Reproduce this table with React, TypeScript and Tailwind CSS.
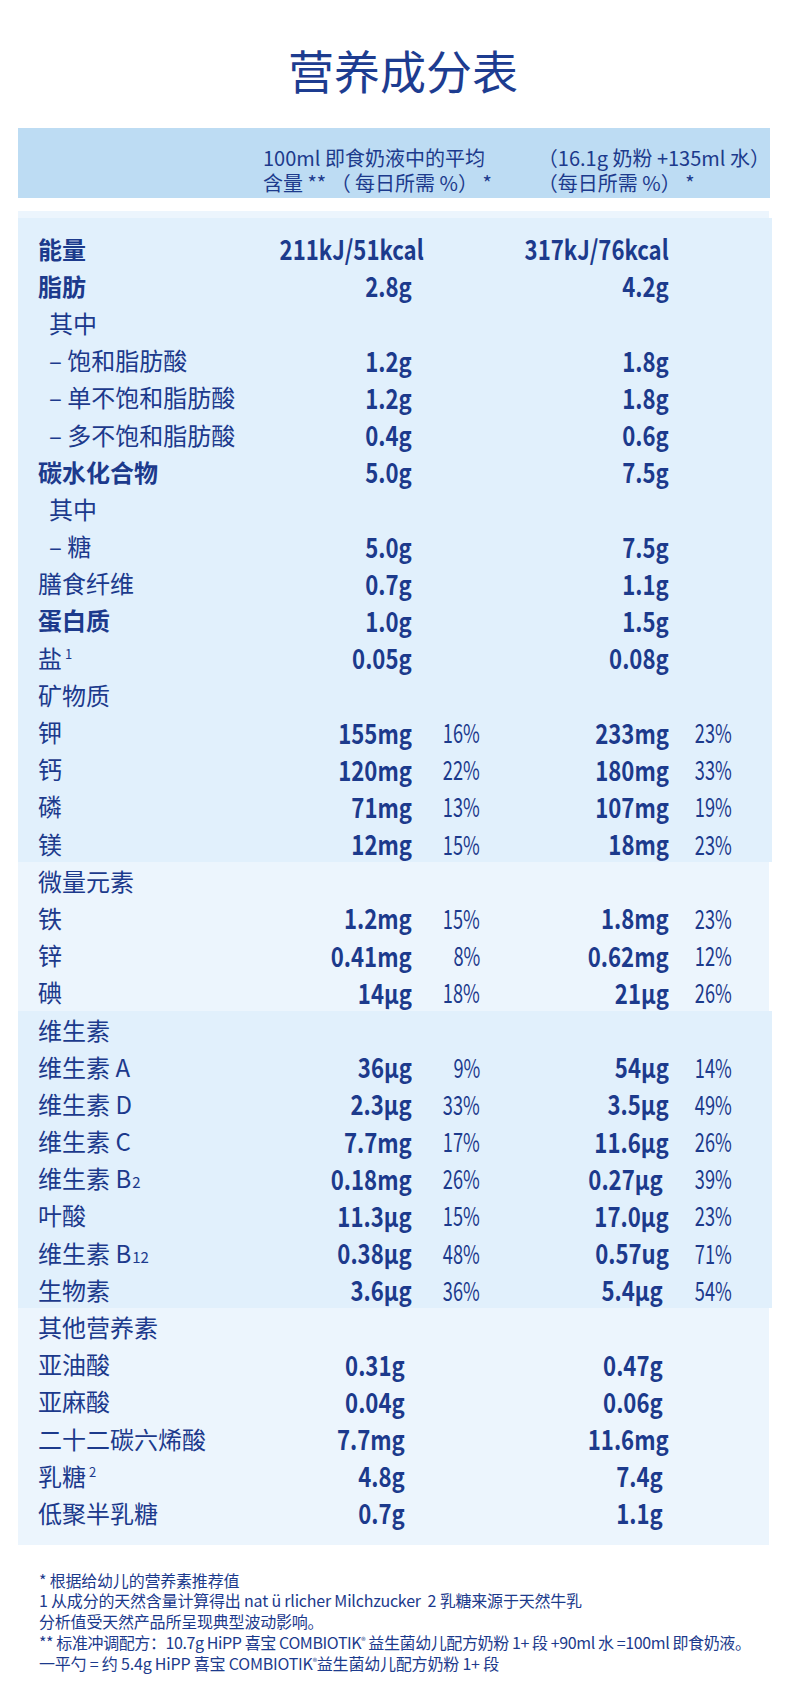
import type { ReactNode } from "react";

type Row = {
  label: ReactNode;
  v1?: string;
  p1?: string;
  v2?: string;
  p2?: string;
  bold?: boolean;
  indent?: boolean;
  v1Cls?: string;
  v2Cls?: string;
};

type Section = { tone: "dark" | "light"; rows: Row[] };

const Sub = ({ children }: { children: ReactNode }) => (
  <span className="ml-[1px] text-[15px]">{children}</span>
);
const Sup = ({ children }: { children: ReactNode }) => (
  <span className="relative top-[-9px] ml-[3px] text-[13px]">{children}</span>
);

const SECTIONS: Section[] = [
  {
    tone: "dark",
    rows: [
      { label: "能量", v1: "211kJ/51kcal", v2: "317kJ/76kcal", bold: true },
      { label: "脂肪", v1: "2.8g", v2: "4.2g", bold: true },
      { label: "其中", indent: true },
      { label: "– 饱和脂肪酸", v1: "1.2g", v2: "1.8g", indent: true },
      { label: "– 单不饱和脂肪酸", v1: "1.2g", v2: "1.8g", indent: true },
      { label: "– 多不饱和脂肪酸", v1: "0.4g", v2: "0.6g", indent: true },
      { label: "碳水化合物", v1: "5.0g", v2: "7.5g", bold: true },
      { label: "其中", indent: true },
      { label: "– 糖", v1: "5.0g", v2: "7.5g", indent: true },
      { label: "膳食纤维", v1: "0.7g", v2: "1.1g" },
      { label: "蛋白质", v1: "1.0g", v2: "1.5g", bold: true },
      { label: <>盐<Sup>1</Sup></>, v1: "0.05g", v2: "0.08g" },
      { label: "矿物质" },
      { label: "钾", v1: "155mg", p1: "16%", v2: "233mg", p2: "23%" },
      { label: "钙", v1: "120mg", p1: "22%", v2: "180mg", p2: "33%" },
      { label: "磷", v1: "71mg", p1: "13%", v2: "107mg", p2: "19%" },
      { label: "镁", v1: "12mg", p1: "15%", v2: "18mg", p2: "23%" },
    ],
  },
  {
    tone: "light",
    rows: [
      { label: "微量元素" },
      { label: "铁", v1: "1.2mg", p1: "15%", v2: "1.8mg", p2: "23%" },
      { label: "锌", v1: "0.41mg", p1: "8%", v2: "0.62mg", p2: "12%" },
      { label: "碘", v1: "14µg", p1: "18%", v2: "21µg", p2: "26%" },
    ],
  },
  {
    tone: "dark",
    rows: [
      { label: "维生素" },
      { label: "维生素 A", v1: "36µg", p1: "9%", v2: "54µg", p2: "14%" },
      { label: "维生素 D", v1: "2.3µg", p1: "33%", v2: "3.5µg", p2: "49%" },
      { label: "维生素 C", v1: "7.7mg", p1: "17%", v2: "11.6µg", p2: "26%" },
      { label: <>维生素 B<Sub>2</Sub></>, v1: "0.18mg", p1: "26%", v2: "0.27µg", p2: "39%", v2Cls: "pr-[6px]" },
      { label: "叶酸", v1: "11.3µg", p1: "15%", v2: "17.0µg", p2: "23%" },
      { label: <>维生素 B<Sub>12</Sub></>, v1: "0.38µg", p1: "48%", v2: "0.57ug", p2: "71%" },
      { label: "生物素", v1: "3.6µg", p1: "36%", v2: "5.4µg", p2: "54%", v2Cls: "pr-[6px]" },
    ],
  },
  {
    tone: "light",
    rows: [
      { label: "其他营养素" },
      { label: "亚油酸", v1: "0.31g", v2: "0.47g", v1Cls: "pr-[7px]", v2Cls: "pr-[6px]" },
      { label: "亚麻酸", v1: "0.04g", v2: "0.06g", v1Cls: "pr-[7px]", v2Cls: "pr-[6px]" },
      { label: "二十二碳六烯酸", v1: "7.7mg", v2: "11.6mg", v1Cls: "pr-[7px]" },
      { label: <>乳糖<Sup>2</Sup></>, v1: "4.8g", v2: "7.4g", v1Cls: "pr-[7px]", v2Cls: "pr-[6px]" },
      { label: "低聚半乳糖", v1: "0.7g", v2: "1.1g", v1Cls: "pr-[7px]", v2Cls: "pr-[6px]" },
    ],
  },
];

const FONT = "font-['Noto_Sans_CJK_SC',sans-serif]";

// the print uses a tall condensed face for figures; squeeze them from the right edge
const Num = ({ children, pct }: { children?: ReactNode; pct?: boolean }) => (
  <span
    className={`inline-block whitespace-nowrap origin-right ${
      pct
        ? "scale-x-[0.7] text-[26px] font-normal"
        : "scale-x-[0.82] text-[27px] font-bold"
    }`}
  >
    {children}
  </span>
);

function NutrientRow({ r }: { r: Row }) {
  return (
    <div className="flex h-[37.2px] items-center text-[24px] leading-none">
      <div
        className={`w-[230px] whitespace-nowrap ${r.indent ? "pl-[31px]" : "pl-[20px]"} ${
          r.bold ? "font-bold" : ""
        }`}
      >
        {r.label}
      </div>
      <div className={`w-[164px] text-right ${r.v1Cls ?? ""}`}>
        <Num>{r.v1}</Num>
      </div>
      <div className="w-[68px] text-right">
        <Num pct>{r.p1}</Num>
      </div>
      <div className={`w-[189px] text-right ${r.v2Cls ?? ""}`}>
        <Num>{r.v2}</Num>
      </div>
      <div className="w-[63px] text-right">
        <Num pct>{r.p2}</Num>
      </div>
    </div>
  );
}

export default function App() {
  return (
    <div className={`w-[790px] min-h-[1699px] bg-white text-[#1c3a8c] ${FONT}`}>
      <div className="flex h-[128px] justify-center pl-[16px] pt-[44px]">
        <h1 className="text-[46px] font-normal leading-[50px] text-[#1d3c90]">营养成分表</h1>
      </div>

      <div className="ml-[18px] flex h-[70px] w-[752px] bg-[#bddcf3] pt-[17px] text-[20px] leading-[25px]">
        <div className="w-[526px] whitespace-nowrap pl-[245px]">
          <div>100ml 即食奶液中的平均</div>
          <div>含量 ** （ 每日所需 %） *</div>
        </div>
        <div className="whitespace-nowrap">
          <div>（16.1g 奶粉 +135ml 水）</div>
          <div>（每日所需 %） *</div>
        </div>
      </div>

      <div className="ml-[18px] mt-[13px] w-[751px] bg-[#ecf5fd] pb-[13px]">
        <div className="h-[7px]" />
        {SECTIONS.map((s, i) => (
          <div
            key={i}
            className={
              s.tone === "dark"
                ? `w-[754px] bg-[#e1f0fc] ${i === 0 ? "pt-[12px]" : ""}`
                : "w-[751px] bg-[#ecf5fd]"
            }
          >
            {s.rows.map((r, k) => (
              <NutrientRow key={k} r={r} />
            ))}
          </div>
        ))}
      </div>

      <div className="mt-[25px] whitespace-nowrap pl-[39px] text-[16px] leading-[20.75px] tracking-[-0.2px]">
        <p>* 根据给幼儿的营养素推荐值</p>
        <p>1 从成分的天然含量计算得出 nat ü rlicher Milchzucker&nbsp; 2 乳糖来源于天然牛乳</p>
        <p>分析值受天然产品所呈现典型波动影响。</p>
        <p className="tracking-[-0.4px]">
          ** 标准冲调配方：10.7g HiPP 喜宝 COMBIOTIK<sup className="text-[9px]">®</sup> 益生菌幼儿配方奶粉 1+ 段 +90ml 水 =100ml 即食奶液。
        </p>
        <p>
          一平勺 = 约 5.4g HiPP 喜宝 COMBIOTIK<sup className="text-[9px]">®</sup>益生菌幼儿配方奶粉 1+ 段
        </p>
      </div>
    </div>
  );
}
